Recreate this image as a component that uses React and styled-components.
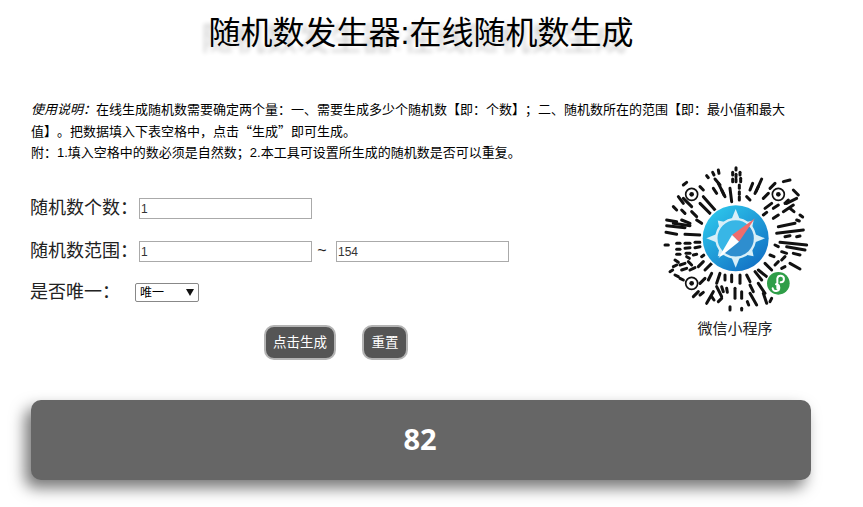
import React from "react";
import styled, { createGlobalStyle } from "styled-components";

const Global = createGlobalStyle`
  html, body { margin: 0; padding: 0; background: #fff; }
  body {
    font-family: "Liberation Sans", "Noto Sans CJK SC", sans-serif;
    color: #000;
    text-spacing-trim: space-all;
  }
`;
const Page = styled.div`
  width: 780px;
  margin-left: 31px;
  height: 507px;
`;
const Title = styled.h1`
  margin: 0;
  height: 99px;
  font-size: 32px;
  line-height: 66px;
  font-weight: 400;
  text-align: center;
  text-shadow: -7px 6px 4px #d0d0d0;
`;
const Notes = styled.div`
  box-sizing: border-box;
  width: 762px;
  height: 65px;
  font-size: 13px;
  line-height: 21.5px;
`;
const Quote = styled.span`
  font-family: "Noto Sans CJK SC", sans-serif;
  line-height: 1;
`;
const Main = styled.div`
  display: flex;
  justify-content: space-between;
  align-items: flex-start;
`;
const FormCol = styled.form`
  padding-top: 23px;
  display: flex;
  flex-direction: column;
`;
const Row = styled.div`
  display: flex;
  align-items: center;
  height: ${(p) => p.$h}px;
`;
const Label = styled.label`
  font-size: 18px;
  line-height: 26px;
  padding-bottom: 2px;
  width: ${(p) => p.$w}px;
  margin-left: -1px;
  margin-right: 1px;
  color: #222;
`;
const Field = styled.input`
  box-sizing: border-box;
  width: 173px;
  height: 21px;
  border: 1px solid #aaa;
  padding: 1px;
  font: 12px "Liberation Sans", sans-serif;
  color: #333;
  outline: none;
`;
const Tilde = styled.span`
  width: 24px;
  padding-bottom: 2px;
  margin-left: -2px;
  margin-right: 2px;
  text-align: center;
  font-size: 16px;
  color: #222;
`;
const PickerWrap = styled.div`
  position: relative;
  width: 64px;
  height: 19px;
  &::after {
    content: "";
    position: absolute;
    right: 5px;
    top: 6px;
    border-left: 4px solid transparent;
    border-right: 4px solid transparent;
    border-top: 7px solid #111;
    pointer-events: none;
  }
`;
const Picker = styled.select`
  appearance: none;
  box-sizing: border-box;
  display: block;
  width: 64px;
  height: 19px;
  font: 12px "Liberation Sans", "Noto Sans CJK SC", sans-serif;
  padding: 0 0 0 4px;
  border: 1px solid #888;
  border-radius: 2px;
  background: #fff;
  color: #000;
`;
const Buttons = styled.div`
  display: flex;
  gap: 26px;
  margin: 13px 0 0 233px;
`;
const Btn = styled.button`
  box-sizing: border-box;
  width: ${(p) => p.$w}px;
  height: 35px;
  padding: 0 0 3px;
  border: 2px solid #b4b4b4;
  border-radius: 10px;
  background: #555;
  color: #fff;
  font: 13.5px "Liberation Sans", "Noto Sans CJK SC", sans-serif;
`;
const QrCol = styled.div`
  width: 151px;
  padding-top: 1px;
  display: flex;
  flex-direction: column;
  align-items: center;
`;
const Caption = styled.div`
  font-size: 15px;
  line-height: 24px;
  margin-left: -1px;
  color: #222;
`;
const Result = styled.div`
  margin-top: 40px;
  height: 80px;
  box-sizing: border-box;
  padding-right: 2px;
  border-radius: 10px;
  background: #666;
  color: #fff;
  font: 700 29px/78px "Open Sans", sans-serif;
  text-align: center;
  box-shadow: -6px 8px 15px #777;
`;

const dashes = [
  [170,62,175,68],[188,52,192,60],[205,45,207,55],[258,38,258,45],[248,52,248,60],[270,52,270,60],[258,58,258,66],
  [248,72,248,80],[258,72,258,80],[272,70,272,80],[240,100,245,140],[268,90,268,100],[268,110,268,118],[268,125,268,135],
  [335,72,318,110],[308,85,300,105],[325,95,315,115],[205,85,225,125],[190,100,200,115],[215,105,222,120],[195,72,210,90],
  [100,130,125,155],[85,125,100,145],[70,155,80,165],[95,165,105,175],[125,170,140,185],[150,145,180,175],[160,125,195,165],
  [50,195,80,200],[50,212,105,218],[48,232,80,238],[70,205,120,212],[95,195,120,205],[105,238,150,240],[140,195,155,205],
  [45,270,55,270],[80,265,90,265],[105,265,120,265],[135,262,150,262],[80,283,90,283],[105,280,120,278],[135,278,150,275],
  [80,298,90,298],[108,295,120,295],[70,335,80,330],[90,330,105,325],[115,320,125,330],[95,345,110,340],[120,345,135,338],
  [145,335,160,320],[165,345,185,325],[75,360,85,365],[90,370,100,375],[150,385,165,370],[175,375,185,355],[200,385,210,355],
  [225,360,225,375],[245,360,245,380],[270,360,270,385],[290,360,300,380],[315,350,335,375],[325,345,350,365],[345,325,365,345],
  [130,425,145,410],[170,445,190,410],[200,395,215,425],[215,395,220,410],[240,455,240,465],[275,460,275,465],[255,400,255,430],
  [275,410,275,430],[300,390,310,410],[325,385,345,415],[300,415,320,450],[340,415,350,445],[205,440,215,430],
  [400,170,430,150],[410,145,440,130],[385,215,435,205],[380,235,460,225],[390,262,470,270],[410,275,465,285],[430,295,450,300],
  [395,290,410,295],[420,325,450,342],[370,190,385,180],[370,160,385,150],[345,160,365,145],[375,270,385,275],
  [360,100,375,85],[340,130,355,115],[400,80,420,75],[430,105,445,120],[405,145,415,135],[395,315,405,305],[375,330,385,320],
  [100,90,110,82],[150,95,160,105],[75,315,85,322],[60,350,68,345],[110,305,118,310],[155,305,162,300],[130,300,140,298],
  [230,400,232,412],[185,425,192,435],[292,440,296,450],[360,440,365,430],[450,180,458,186],[440,195,448,198],[360,300,372,305],
  [405,245,420,242],[440,245,450,243],[395,340,405,335],[420,160,432,170],[340,180,350,172],[290,125,300,135],[150,420,160,412],
];
const eyes = [[125,118],[385,118],[125,385]];
const points = [
  [257,250,0,88],[257,250,90,88],[257,250,180,88],[257,250,270,88],
  [257,250,45,76],[257,250,135,76],[257,250,225,76],[257,250,315,76],
];
const spike = ([cx, cy, deg, r]) => {
  const a = (deg * Math.PI) / 180;
  const at = (rr, off) => {
    const x = cx + Math.sin(a + off) * rr;
    const y = cy - Math.cos(a + off) * rr;
    return `${x},${y}`;
  };
  return `${at(r, 0)} ${at(58, 0.22)} ${at(58, -0.22)}`;
};

const QrCode = () => (
  <svg width="151" height="152" viewBox="30 30 453 456" aria-label="qr code">
    <defs>
      <linearGradient id="dial" x1="0.15" y1="0.1" x2="0.85" y2="0.95">
        <stop offset="0" stopColor="#2cc3ea" />
        <stop offset="1" stopColor="#1270c4" />
      </linearGradient>
      <linearGradient id="face" x1="0.2" y1="0.2" x2="0.8" y2="0.8">
        <stop offset="0.49" stopColor="#38b6e6" />
        <stop offset="0.51" stopColor="#2e8ecf" />
      </linearGradient>
    </defs>
    <g stroke="#111" strokeWidth="9" strokeLinecap="round">
      {dashes.map((d, i) => (
        <line key={i} x1={d[0]} y1={d[1]} x2={d[2]} y2={d[3]} />
      ))}
    </g>
    {eyes.map((e, i) => (
      <g key={i}>
        <circle cx={e[0]} cy={e[1]} r="18" fill="#fff" stroke="#111" strokeWidth="5" />
        <circle cx={e[0]} cy={e[1]} r="7" fill="#111" />
      </g>
    ))}
    <circle cx="257" cy="250" r="104" fill="#fff" />
    <circle cx="257" cy="250" r="99" fill="url(#dial)" />
    {points.map((p, i) => (
      <polygon key={i} points={spike(p)} fill="#d8eff8" />
    ))}
    <circle cx="257" cy="250" r="58" fill="url(#face)" stroke="#d8eff8" strokeWidth="7" />
    <polygon points="315,190 246,240 267,260" fill="#ef6d6d" />
    <polygon points="205,310 246,240 267,260" fill="#ffffff" />
    <circle cx="385" cy="385" r="38" fill="#fff" />
    <circle cx="385" cy="385" r="34" fill="#2f9e48" />
    <path d="M368 400a10 10 0 1 0 10-12M392 382a10 10 0 1 0-10-12v30" fill="none" stroke="#fff" strokeWidth="6" strokeLinecap="round" />
  </svg>
);

export default function App() {
  return (
    <Page>
      <Global />
      <Title>随机数发生器:在线随机数生成</Title>
      <Notes>
        <em>使用说明：</em>在线生成随机数需要确定两个量：一、需要生成多少个随机数【即：个数】；二、随机数所在的范围【即：最小值和最大值】。把数据填入下表空格中，点击<Quote>“生成”</Quote>即可生成。
        <br />
        附：1.填入空格中的数必须是自然数；2.本工具可设置所生成的随机数是否可以重复。
      </Notes>
      <Main>
        <FormCol>
          <Row $h={43}>
            <Label $w={108}>随机数个数：</Label>
            <Field defaultValue="1" />
          </Row>
          <Row $h={43}>
            <Label $w={108}>随机数范围：</Label>
            <Field defaultValue="1" />
            <Tilde>~</Tilde>
            <Field defaultValue="154" />
          </Row>
          <Row $h={39}>
            <Label $w={104}>是否唯一：</Label>
            <PickerWrap>
              <Picker defaultValue="唯一">
                <option>唯一</option>
                <option>可重复</option>
              </Picker>
            </PickerWrap>
          </Row>
          <Buttons>
            <Btn type="button" $w={72}>点击生成</Btn>
            <Btn type="button" $w={46}>重置</Btn>
          </Buttons>
        </FormCol>
        <QrCol>
          <QrCode />
          <Caption>微信小程序</Caption>
        </QrCol>
      </Main>
      <Result>82</Result>
    </Page>
  );
}
